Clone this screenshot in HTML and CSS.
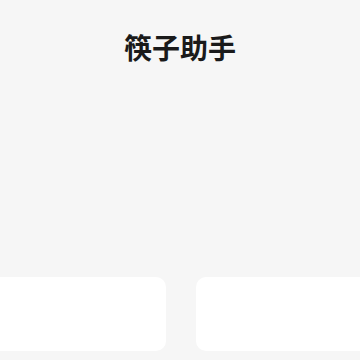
FILE: index.html
```html
<!DOCTYPE html>
<html>
<head>
    <meta charset="utf-8">
    <title>筷子助手</title>
<link rel="stylesheet" href="styles.css">
</head>
<body>
    <div class="page">
        <div class="header">
            <div class="title">筷子助手</div>
        </div>

        <div class="cards">
            <div class="card"></div>
            <div class="card"></div>
        </div>
    </div>
</body>
</html>
```

FILE: styles.css
```css
html, body {
	margin: 0;
	padding: 0;
}

body {
	background-color: #F6F6F6;
	font-family: "Noto Sans CJK SC", "Noto Sans", sans-serif;
}

.page {
	width: 360px;
	height: 360px;
	overflow: hidden;
}

.header {
	padding-top: 29px;
	height: 277px;
	box-sizing: border-box;
	text-align: center;
}

.title {
	font-size: 28px;
	line-height: 36px;
	font-weight: 700;
	color: #1A1A1A;
}

.cards {
	display: flex;
	gap: 30px;
	margin-left: -14px;
}

.card {
	flex: 0 0 180px;
	height: 74px;
	border-radius: 10px;
	background-color: #FFFFFF;
}
```
